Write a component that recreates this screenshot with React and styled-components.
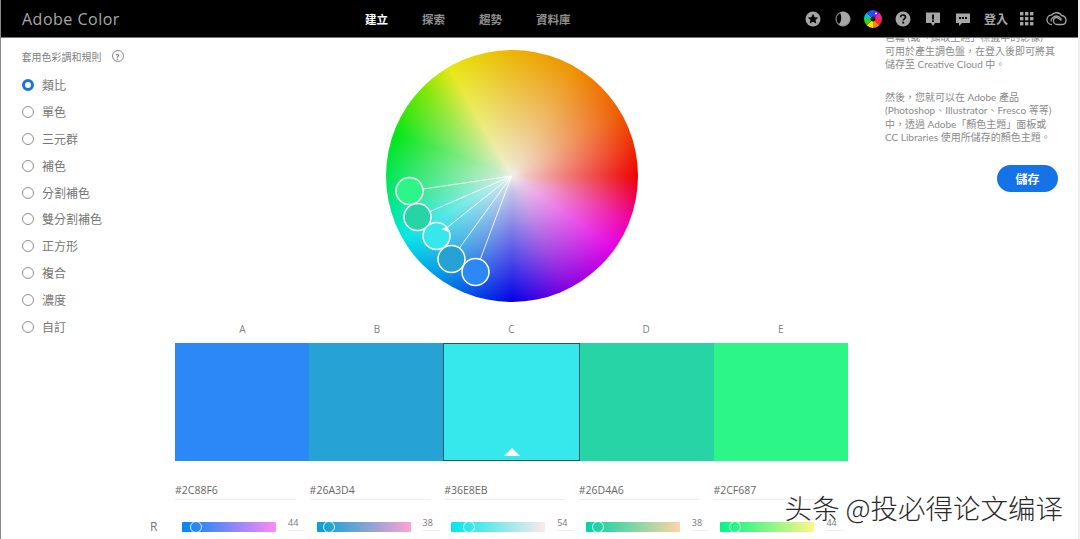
import React from 'react';
import styled, { createGlobalStyle } from 'styled-components';

const swatches = [
  { label: 'A', hex: '#2C88F6', r: 44, g: 136, b: 246 },
  { label: 'B', hex: '#26A3D4', r: 38, g: 163, b: 212 },
  { label: 'C', hex: '#36E8EB', r: 54, g: 232, b: 235, active: true },
  { label: 'D', hex: '#26D4A6', r: 38, g: 212, b: 166 },
  { label: 'E', hex: '#2CF687', r: 44, g: 246, b: 135 },
];

const rules = ['類比', '單色', '三元群', '補色', '分割補色', '雙分割補色', '正方形', '複合', '濃度', '自訂'];

const handles = [
  { x: 475, y: 272, color: '#2C88F6' },
  { x: 451, y: 259, color: '#26A3D4' },
  { x: 417, y: 217, color: '#26D4A6' },
  { x: 409, y: 191, color: '#2CF687' },
  { x: 436, y: 236, color: '#36E8EB' },
];

const wedgeColors = ['#ff2a2a', '#ff8a00', '#ffe000', '#3bd600', '#00c8c8', '#0060ff', '#7a20e0', '#f020a0'];

function wedge(i) {
  const a0 = (i / 8) * Math.PI * 2;
  const a1 = ((i + 1) / 8) * Math.PI * 2;
  return `M9 9L${9 + 9 * Math.cos(a0)} ${9 + 9 * Math.sin(a0)}A9 9 0 0 1 ${9 + 9 * Math.cos(a1)} ${9 + 9 * Math.sin(a1)}Z`;
}

const GlobalStyle = createGlobalStyle`
  html, body {
    margin: 0;
    height: 539px;
    overflow: hidden;
    background: #fff;
  }
  * { box-sizing: border-box; }
`;

const Page = styled.div`
  position: relative;
  width: 1080px;
  height: 539px;
  overflow: hidden;
  background: #fff;
  border-left: 1px solid #8a8a8a;
  border-right: 2px solid #efefef;
  font-family: "Open Sans", "Noto Sans CJK TC", sans-serif;
`;

const Header = styled.header`
  position: relative;
  z-index: 2;
  display: flex;
  align-items: center;
  height: 38px;
  margin-left: -1px;
  margin-right: -2px;
  padding: 0 13px 0 22px;
  background: #000;
  border-bottom: 1px solid #777;
`;

const Brand = styled.div`
  width: 343px;
  color: #a8a8a8;
  font-size: 16px;
  letter-spacing: 0.5px;
`;

const Nav = styled.nav`
  display: flex;
  gap: 34px;
`;

const NavItem = styled.a`
  color: ${(p) => (p.$active ? '#fff' : '#8f8f8f')};
  font-size: 11.5px;
  font-weight: 700;
`;

const Tools = styled.div`
  display: flex;
  align-items: center;
  gap: 14px;
  margin-left: auto;
  color: #a6a6a6;
  svg { display: block; }
`;

const Login = styled.span`
  margin: 0 -2px 0 -1px;
  font-size: 12px;
  font-weight: 700;
  color: #a6a6a6;
`;

const CloudIcon = styled.svg`
  margin-left: -2px;
`;

const ColorIcon = styled.svg`
  margin: 0 -1px;
`;

const Body = styled.main`
  display: flex;
`;

const RulePanel = styled.aside`
  width: 174px;
  padding: 11px 0 0 20.5px;
`;

const RuleTitle = styled.div`
  display: flex;
  align-items: center;
  gap: 10px;
  height: 14px;
  margin-bottom: 9px;
  color: #808080;
  font-size: 10px;
`;

const HelpMark = styled.span`
  display: flex;
  align-items: center;
  justify-content: center;
  width: 12px;
  height: 12px;
  border: 1px solid #888;
  border-radius: 50%;
  color: #777;
  font-size: 8px;
  font-weight: 700;
`;

const RuleRow = styled.label`
  display: flex;
  align-items: center;
  gap: 8.5px;
  height: 26.8px;
  color: #767676;
  font-size: 12px;
`;

const Radio = styled.span`
  width: 12px;
  height: 12px;
  border-radius: 50%;
  background: #fff;
  border: ${(p) => (p.$checked ? '3.5px solid #1473e6' : '1.5px solid #8e8e8e')};
`;

const Center = styled.section`
  width: 673px;
`;

const WheelArea = styled.div`
  position: relative;
  width: 252px;
  height: 252px;
  margin: 12px auto 0;
`;

const Wheel = styled.div`
  width: 100%;
  height: 100%;
  border-radius: 50%;
  background:
    radial-gradient(circle closest-side, rgba(240, 238, 234, 1) 0%, rgba(240, 238, 234, 0.82) 12%, rgba(240, 238, 234, 0.5) 45%, rgba(240, 238, 234, 0) 100%),
    conic-gradient(#ecb400 0deg, #ee9000 30deg, #ee5a00 60deg, #ee0000 90deg, #ee00a0 110deg, #e600e6 125deg, #8000e0 155deg, #0000e6 180deg, #0090e6 215deg, #00e6e6 240deg, #00e670 262deg, #00e610 290deg, #80e600 315deg, #e8e810 330deg, #ecb400 360deg);
`;

const WheelMarks = styled.svg`
  position: absolute;
  top: 0;
  left: 0;
  overflow: visible;
`;

const Labels = styled.div`
  display: grid;
  grid-template-columns: repeat(5, 1fr);
  margin-top: 20px;
  height: 21px;
  color: #808080;
  font-size: 10px;
  text-align: center;
`;

const Swatches = styled.div`
  display: grid;
  grid-template-columns: 134px 134px 137px 134px 134px;
  height: 118px;
`;

const Swatch = styled.div`
  position: relative;
  background: ${(p) => p.$color};
  ${(p) => p.$active && 'border: 1px solid #1c5a66;'}
`;

const Caret = styled.span`
  position: absolute;
  bottom: 4px;
  left: 50%;
  margin-left: -8px;
  border-left: 8px solid transparent;
  border-right: 8px solid transparent;
  border-bottom: 8px solid #fff;
`;

const HexRow = styled.div`
  display: grid;
  grid-template-columns: repeat(5, 1fr);
  margin-top: 22px;
`;

const HexField = styled.div`
  width: 121px;
  height: 17px;
  color: #666;
  font-size: 10.5px;
  line-height: 15px;
  border-bottom: 1px solid #eeeeee;
`;

const SliderRow = styled.div`
  display: flex;
  align-items: center;
  margin: 18px 0 0 -25px;
`;

const ChannelName = styled.span`
  width: 25px;
  color: #777;
  font-size: 12px;
`;

const SliderCell = styled.div`
  display: flex;
  align-items: center;
  flex: 0 0 134.6px;
  gap: 12px;
  padding-left: 7px;
`;

const Track = styled.div`
  position: relative;
  width: 94px;
  height: 10px;
  border-radius: 1px;
`;

const Thumb = styled.span`
  position: absolute;
  top: -1px;
  width: 12px;
  height: 12px;
  margin-left: -8px;
  border: 1px solid rgba(255, 255, 255, 0.85);
  border-radius: 50%;
`;

const ChannelValue = styled.span`
  width: 17px;
  margin-top: -7px;
  padding-bottom: 1px;
  color: #777;
  font-size: 9px;
  border-bottom: 1px solid #eee;
`;

const InfoPanel = styled.aside`
  width: 173px;
  margin: -7px 0 0 37px;
  color: #8a8a8a;
  font-family: Lato, "Noto Sans CJK TC", sans-serif;
  font-size: 10px;
  line-height: 13.5px;
`;

const InfoText = styled.p`
  margin: 0 0 19px;
  white-space: nowrap;
`;

const SaveButton = styled.button`
  display: block;
  width: 61px;
  height: 27px;
  margin: 20px 0 0 112px;
  border: 0;
  border-radius: 14px;
  background: #1473e6;
  color: #fff;
  font-family: inherit;
  font-size: 12px;
  font-weight: 700;
`;

const Watermark = styled.div`
  position: absolute;
  z-index: 3;
  right: 15px;
  bottom: 17px;
  color: #2a2a2a;
  font-family: "Noto Sans CJK SC", sans-serif;
  font-size: 27.5px;
  font-weight: 300;
  line-height: 30px;
  white-space: nowrap;
  text-shadow: 1px 1px 0 #fff, -1px 0 0 #fff;
`;

function WheelHandles() {
  return (
    <WheelMarks width="252" height="252" viewBox="385.5 50 252 252">
      {handles.map((h) => (
        <line key={h.x} x1="511" y1="176" x2={h.x} y2={h.y} stroke="#fff" strokeOpacity="0.85" strokeWidth="1" />
      ))}
      {handles.map((h) => (
        <circle key={h.x} cx={h.x} cy={h.y} r="13.5" fill={h.color} stroke="#fff" strokeWidth="1.5" />
      ))}
      <path d="M441 229l5 -2l2 5z" fill="#fff" />
    </WheelMarks>
  );
}

function ToolIcons() {
  return (
    <Tools>
      <svg width="16" height="16" viewBox="0 0 16 16">
        <circle cx="8" cy="8" r="7.5" fill="#a6a6a6" />
        <path d="M8 2.8l1.6 3.4 3.600.4-2.700 2.400.8 3.600L8 10.800l-3.300 1.800.8-3.600L2.800 6.600l3.600-.4z" fill="#000" />
      </svg>
      <svg width="16" height="16" viewBox="0 0 16 16">
        <circle cx="8" cy="8" r="7" fill="none" stroke="#a6a6a6" strokeWidth="1" />
        <path d="M5 1.500A7 7 0 1 1 3.500 13.300C6.500 11 7 6 5 1.500Z" fill="#a6a6a6" />
      </svg>
      <ColorIcon width="18" height="18" viewBox="0 0 18 18">
        {wedgeColors.map((c, i) => (
          <path key={c} d={wedge(i)} fill={c} />
        ))}
        <circle cx="9" cy="9" r="2.500" fill="#222" />
        <circle cx="12" cy="3.500" r="1" fill="#fff" />
      </ColorIcon>
      <svg width="16" height="16" viewBox="0 0 16 16">
        <circle cx="8" cy="8" r="7.500" fill="#a6a6a6" />
        <path d="M5.600 6.200C5.600 4.700 6.700 4 8 4s2.500.8 2.500 2.100c0 1.900-2.300 1.800-2.300 3.500" fill="none" stroke="#000" strokeWidth="1.600" />
        <rect x="7.300" y="10.700" width="1.800" height="1.800" fill="#000" />
      </svg>
      <svg width="16" height="16" viewBox="0 0 16 16">
        <path d="M1 1.500h14v10.500h-5l-2 3-2-3H1z" fill="#a6a6a6" />
        <rect x="7.100" y="3.500" width="1.800" height="5" fill="#000" />
        <rect x="7.100" y="9.300" width="1.800" height="1.700" fill="#000" />
      </svg>
      <svg width="16" height="16" viewBox="0 0 16 16">
        <path d="M1 2.500h14v9.500H7l-3 3v-3H1z" fill="#a6a6a6" />
        <rect x="4" y="6" width="2" height="2" fill="#000" />
        <rect x="7" y="6" width="2" height="2" fill="#000" />
        <rect x="10" y="6" width="2" height="2" fill="#000" />
      </svg>
      <Login>登入</Login>
      <svg width="14" height="14" viewBox="0 0 14 14" fill="#a6a6a6">
        {[0, 5, 10].flatMap((y) =>
          [0, 5, 10].map((x) => <rect key={`${x}-${y}`} x={x} y={y} width="3.400" height="3.400" />)
        )}
      </svg>
      <CloudIcon width="21" height="16" viewBox="0 0 21 16" fill="none" stroke="#a6a6a6" strokeWidth="1.300">
        <path d="M6 13.500C3 13.500 1 11.300 1 8.700S3 4 5.500 4C8 1 13.500 .800 15.500 4.500C18 4.800 20 6.500 20 9.200s-2 4.300-4.500 4.300H11C9 13.500 7.500 11.500 7.500 9.500S9 6.500 10.500 6.500s3 1.400 5 3" />
        <path d="M5 10.500C5 7.500 7.500 5 10.500 5c2.300 0 3.500 1.300 5 3.300" />
      </CloudIcon>
    </Tools>
  );
}

export default function App() {
  return (
    <Page>
      <GlobalStyle />
      <Header>
        <Brand>Adobe Color</Brand>
        <Nav>
          <NavItem $active>建立</NavItem>
          <NavItem>探索</NavItem>
          <NavItem>趨勢</NavItem>
          <NavItem>資料庫</NavItem>
        </Nav>
        <ToolIcons />
      </Header>

      <Body>
        <RulePanel>
          <RuleTitle>
            套用色彩調和規則
            <HelpMark>?</HelpMark>
          </RuleTitle>
          {rules.map((rule, i) => (
            <RuleRow key={rule}>
              <Radio $checked={i === 0} />
              {rule}
            </RuleRow>
          ))}
        </RulePanel>

        <Center>
          <WheelArea>
            <Wheel />
            <WheelHandles />
          </WheelArea>
          <Labels>
            {swatches.map((s) => (
              <span key={s.label}>{s.label}</span>
            ))}
          </Labels>
          <Swatches>
            {swatches.map((s) => (
              <Swatch key={s.label} $color={s.hex} $active={s.active}>
                {s.active && <Caret />}
              </Swatch>
            ))}
          </Swatches>
          <HexRow>
            {swatches.map((s) => (
              <HexField key={s.label}>{s.hex}</HexField>
            ))}
          </HexRow>
          <SliderRow>
            <ChannelName>R</ChannelName>
            {swatches.map((s) => (
              <SliderCell key={s.label}>
                <Track style={{ background: `linear-gradient(90deg, rgb(0,${s.g},${s.b}), rgb(255,${s.g},${s.b}))` }}>
                  <Thumb style={{ left: `${(s.r / 255) * 100}%` }} />
                </Track>
                <ChannelValue>{s.r}</ChannelValue>
              </SliderCell>
            ))}
          </SliderRow>
        </Center>

        <InfoPanel>
          <InfoText>
            色輪 (或「擷取主題」標籤中的影像)
            <br />
            可用於產生調色盤，在登入後即可將其
            <br />
            儲存至 Creative Cloud 中。
          </InfoText>
          <InfoText>
            然後，您就可以在 Adobe 產品
            <br />
            (Photoshop、Illustrator、Fresco 等等)
            <br />
            中，透過 Adobe「顏色主題」面板或
            <br />
            CC Libraries 使用所儲存的顏色主題。
          </InfoText>
          <SaveButton>儲存</SaveButton>
        </InfoPanel>
      </Body>

      <Watermark>头条 @投必得论文编译</Watermark>
    </Page>
  );
}
